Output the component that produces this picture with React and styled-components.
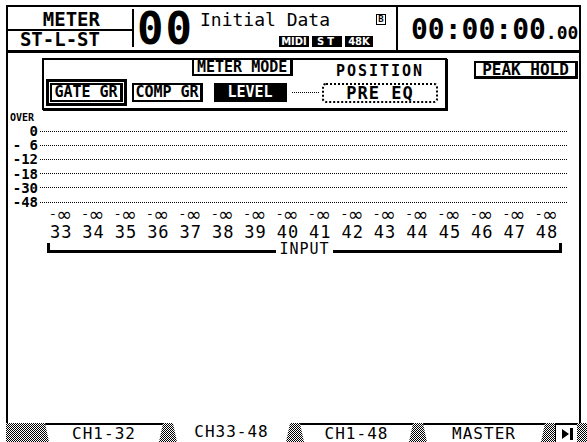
import React from 'react';
import styled, { createGlobalStyle } from 'styled-components';

const GlobalStyle = createGlobalStyle`
  html, body {
    margin: 0;
    padding: 0;
    background: #fff;
  }
  body {
    font-family: "DejaVu Sans Mono", "Liberation Mono", monospace;
    color: #000;
  }
`;

const dots = 'repeating-linear-gradient(90deg, #000 0 1px, transparent 1px 2px)';
const hatch = 'repeating-conic-gradient(#000 0% 25%, #fff 0% 50%) 0 0 / 2px 2px';

const Screen = styled.div`
  width: 587px;
  height: 442px;
  box-sizing: border-box;
  padding-top: 5px;
  display: flex;
  flex-direction: column;
  overflow: hidden;
`;

const Frame = styled.div`
  flex: 1;
  margin: 0 6px;
  border: 2px solid #000;
  border-bottom: none;
  display: flex;
  flex-direction: column;
`;

/* ---------- header ---------- */

const Header = styled.header`
  height: 43px;
  border-bottom: 3px solid #000;
  display: flex;
`;

const PageCell = styled.div`
  width: 124px;
  margin: 2px 0 3px;
  border-right: 2px solid #000;
  display: flex;
  flex-direction: column;
`;

const PageName = styled.div`
  font-weight: bold;
  font-size: 19px;
  line-height: ${p => p.$h}px;
  height: ${p => p.$h}px;
  padding-right: 32px;
  text-align: right;
  border-bottom: ${p => (p.$rule ? '2px solid #000' : 'none')};
`;

const SceneCell = styled.div`
  width: 259px;
  border-right: 2px solid #000;
  display: flex;
  padding-left: 3px;
`;

const SceneNumber = styled.div`
  font-weight: bold;
  font-size: 44px;
  line-height: 43px;
  letter-spacing: 2px;
`;

const SceneInfo = styled.div`
  flex: 1;
  display: flex;
  flex-direction: column;
  padding: 3px 10px 0 6px;
`;

const TitleRow = styled.div`
  display: flex;
  align-items: flex-start;
  justify-content: space-between;
`;

const SceneTitle = styled.div`
  font-size: 18px;
  line-height: 20px;
`;

const Protect = styled.div`
  margin-top: 4px;
  width: 8px;
  height: 9px;
  border: 1px solid #000;
  font-size: 9px;
  line-height: 9px;
  font-weight: bold;
  text-align: center;
`;

const BadgeRow = styled.div`
  display: flex;
  justify-content: flex-end;
  gap: 3px;
  margin-top: 6px;
  padding-right: 13px;
`;

const Badge = styled.span`
  background: #000;
  color: #fff;
  font-family: "DejaVu Sans", sans-serif;
  font-weight: bold;
  font-size: 10px;
  line-height: 11px;
  height: 11px;
  width: ${p => p.$w}px;
  text-align: center;
  letter-spacing: ${p => p.$ls || 0}px;
`;

const TimeCell = styled.div`
  flex: 1;
  display: flex;
  align-items: baseline;
  padding: 6px 0 0 13px;
  font-weight: bold;
`;

const TimeMain = styled.span`
  font-size: 28px;
  line-height: 34px;
`;

const TimeFrac = styled.span`
  font-size: 18px;
`;

/* ---------- meter mode area ---------- */

const Content = styled.main`
  flex: 1;
  display: flex;
  flex-direction: column;
`;

const TopRow = styled.div`
  display: flex;
  align-items: flex-start;
  padding: 5px 1px 0 34px;
`;

const ModeBox = styled.section`
  width: 405px;
  height: 52px;
  box-sizing: border-box;
  border: 2px solid #000;
  box-shadow: 1px 1px 0 #000;
  padding: 0 0 1px 2px;
  display: flex;
  align-items: flex-end;
`;

const ModeGroup = styled.div`
  display: flex;
  flex-direction: column;
  align-items: flex-start;
`;

const ModeTitle = styled.div`
  margin-left: 146px;
  height: 16px;
  box-sizing: border-box;
  border: 2px solid #000;
  border-top: none;
  border-right-width: 3px;
  padding: 0 3px;
  font-weight: bold;
  font-size: 15px;
  line-height: 14px;
`;

const ModeButtons = styled.div`
  display: flex;
  align-items: center;
  height: 29px;
  margin-top: 2px;
`;

const ModeButton = styled.div`
  width: ${p => p.$w}px;
  height: 19px;
  box-sizing: border-box;
  margin-left: ${p => p.$ml}px;
  border: 2px solid #000;
  border-right-width: 3px;
  font-weight: bold;
  font-size: 15px;
  line-height: 15px;
  display: flex;
  align-items: center;
  justify-content: center;
  background: ${p => (p.$on ? '#000' : '#fff')};
  color: ${p => (p.$on ? '#fff' : '#000')};
  box-shadow: ${p => (p.$cursor ? '0 0 0 1px #fff, 0 0 0 4px #000' : 'none')};
`;

const Connector = styled.div`
  width: 28px;
  height: 1px;
  margin-left: 5px;
  background: ${dots};
`;

const PositionGroup = styled.div`
  margin: 0 0 4px 2px;
  display: flex;
  flex-direction: column;
  align-items: center;
`;

const PositionLabel = styled.div`
  font-weight: bold;
  font-size: 15px;
  line-height: 14px;
  letter-spacing: 2px;
  margin-bottom: 5px;
`;

const PreEq = styled.div`
  width: 116px;
  height: 20px;
  box-sizing: border-box;
  border: 2px dotted #000;
  border-radius: 4px;
  font-weight: bold;
  font-size: 17px;
  line-height: 16px;
  text-align: center;
  letter-spacing: 1px;
`;

const PeakHold = styled.div`
  margin: 3px 0 0 auto;
  width: 104px;
  height: 18px;
  box-sizing: border-box;
  border: 2px solid #000;
  border-right-width: 3px;
  border-bottom-width: 3px;
  font-weight: bold;
  font-size: 16px;
  line-height: 13px;
  text-align: center;
`;

/* ---------- meter scale ---------- */

const Scale = styled.div`
  margin-top: 2px;
  display: flex;
  flex-direction: column;
`;

const OverLabel = styled.div`
  height: 12px;
  padding-left: 2px;
  font-weight: bold;
  font-size: 10px;
  line-height: 12px;
`;

const MarkRow = styled.div`
  height: 14.2px;
  display: flex;
  align-items: center;
`;

const MarkLabel = styled.div`
  width: 30px;
  padding-right: 2px;
  text-align: right;
  white-space: pre;
  font-weight: bold;
  font-size: 14px;
  line-height: 14px;
`;

const Dots = styled.div`
  width: 528px;
  height: 1px;
  background: ${dots};
`;

const ChannelGrid = styled.div`
  margin-left: 37px;
  display: grid;
  grid-template-columns: repeat(16, 32.4px);
  grid-template-rows: 10px 24px;
`;

const LevelCell = styled.div`
  display: flex;
  align-items: center;
  justify-content: center;
  font-family: "DejaVu Sans", sans-serif;
  font-size: 13px;
  line-height: 10px;
`;

const Infinity = styled.span`
  font-size: 19px;
  line-height: 10px;
  margin-left: 1px;
`;

const ChannelCell = styled.div`
  text-align: center;
  padding-top: 2px;
  font-size: 17px;
  line-height: 22px;
  letter-spacing: 1px;
`;

const Bracket = styled.div`
  margin-left: 39px;
  width: 515px;
  height: 10px;
  box-sizing: border-box;
  border-left: 3px solid #000;
  border-right: 3px solid #000;
  display: flex;
  align-items: center;
`;

const BracketLine = styled.div`
  flex: 1;
  height: 3px;
  align-self: flex-end;
  background: #000;
`;

const BracketLabel = styled.div`
  padding: 2px 3px 0;
  font-size: 15px;
  line-height: 10px;
  letter-spacing: 1px;
`;

/* ---------- tabs ---------- */

const TabBar = styled.nav`
  height: 19px;
  margin-left: 6px;
  padding-left: 39px;
  display: flex;
  gap: 10px;
  background: ${hatch};
`;

const Tab = styled.div`
  width: ${p => p.$w}px;
  height: 19px;
  box-sizing: border-box;
  background: #fff;
  border-top: ${p => (p.$active ? 'none' : '2px solid #000')};
  clip-path: polygon(0 0, 100% 0, calc(100% - 4px) 100%, 4px 100%);
  font-size: 16px;
  line-height: 18px;
  letter-spacing: 1px;
  text-align: center;
`;

const ArrowTab = styled.div`
  width: 22px;
  height: 19px;
  box-sizing: border-box;
  background: #fff;
  border-top: 2px solid #000;
  border-left: 1px solid #000;
  display: flex;
  align-items: center;
  justify-content: center;
`;

const marks = ['0', '- 6', '-12', '-18', '-30', '-48'];
const channels = Array.from({ length: 16 }, (_, i) => 33 + i);
const tabs = [
  { label: 'CH1-32', w: 118 },
  { label: 'CH33-48', w: 117, active: true },
  { label: 'CH1-48', w: 113 },
  { label: 'MASTER', w: 122 },
];

export default function App() {
  return (
    <>
      <GlobalStyle />
      <Screen>
        <Frame>
          <Header>
            <PageCell>
              <PageName $h={20} $rule>METER</PageName>
              <PageName $h={16}>ST-L-ST</PageName>
            </PageCell>
            <SceneCell>
              <SceneNumber>00</SceneNumber>
              <SceneInfo>
                <TitleRow>
                  <SceneTitle>Initial Data</SceneTitle>
                  <Protect>B</Protect>
                </TitleRow>
                <BadgeRow>
                  <Badge $w={30}>MIDI</Badge>
                  <Badge $w={30} $ls={3}>ST</Badge>
                  <Badge $w={28}>48K</Badge>
                </BadgeRow>
              </SceneInfo>
            </SceneCell>
            <TimeCell>
              <TimeMain>00:00:00</TimeMain>
              <TimeFrac>.00</TimeFrac>
            </TimeCell>
          </Header>

          <Content>
            <TopRow>
              <ModeBox>
                <ModeGroup>
                  <ModeTitle>METER MODE</ModeTitle>
                  <ModeButtons>
                    <ModeButton $w={73} $ml={4} $cursor>GATE GR</ModeButton>
                    <ModeButton $w={71} $ml={9}>COMP GR</ModeButton>
                    <ModeButton $w={73} $ml={11} $on>LEVEL</ModeButton>
                    <Connector />
                  </ModeButtons>
                </ModeGroup>
                <PositionGroup>
                  <PositionLabel>POSITION</PositionLabel>
                  <PreEq>PRE EQ</PreEq>
                </PositionGroup>
              </ModeBox>
              <PeakHold>PEAK HOLD</PeakHold>
            </TopRow>

            <Scale>
              <OverLabel>OVER</OverLabel>
              {marks.map(m => (
                <MarkRow key={m}>
                  <MarkLabel>{m}</MarkLabel>
                  <Dots />
                </MarkRow>
              ))}
            </Scale>

            <ChannelGrid>
              {channels.map(c => (
                <LevelCell key={'l' + c}>
                  -<Infinity>∞</Infinity>
                </LevelCell>
              ))}
              {channels.map(c => (
                <ChannelCell key={c}>{c}</ChannelCell>
              ))}
            </ChannelGrid>

            <Bracket>
              <BracketLine />
              <BracketLabel>INPUT</BracketLabel>
              <BracketLine />
            </Bracket>
          </Content>
        </Frame>

        <TabBar>
          {tabs.map(t => (
            <Tab key={t.label} $w={t.w} $active={t.active}>
              {t.label}
            </Tab>
          ))}
          <ArrowTab>
            <svg width="14" height="12" viewBox="0 0 14 12">
              <path d="M2 1 L9 6 L2 11 Z" fill="#000" />
              <rect x="10" y="0" width="3" height="12" fill="#000" />
            </svg>
          </ArrowTab>
        </TabBar>
      </Screen>
    </>
  );
}
